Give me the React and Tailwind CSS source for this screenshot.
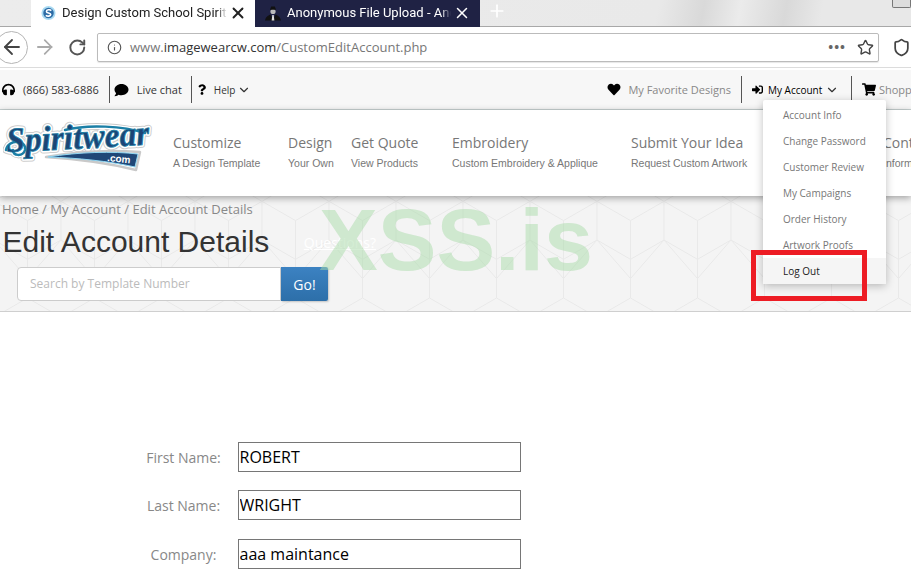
import { ArrowLeft, ArrowRight, ChevronDown, Info, Plus, RotateCw, Shield, Star, X } from "lucide-react";
import { FaComment, FaHeadphones, FaHeart, FaQuestion, FaShoppingCart, FaSignInAlt } from "react-icons/fa";

const navItems = [
  { title: "Customize", sub: "A Design Template", cls: "w-[90px] mr-[25px]" },
  { title: "Design", sub: "Your Own", cls: "w-[44px] mr-[19px]" },
  { title: "Get Quote", sub: "View Products", cls: "w-[67px] mr-[34px]" },
  { title: "Embroidery", sub: "Custom Embroidery & Applique", cls: "w-[148px] mr-[31px]" },
  { title: "Submit Your Idea", sub: "Request Custom Artwork", cls: "w-[113px] mr-[139px]" },
  { title: "Contact", sub: "Information", cls: "w-[100px] shrink-0" },
];

const accountLinks = ["Account Info", "Change Password", "Customer Review", "My Campaigns", "Order History", "Artwork Proofs"];

const fields = [
  { label: "First Name:", value: "ROBERT" },
  { label: "Last Name:", value: "WRIGHT" },
  { label: "Company:", value: "aaa maintance" },
];

const Divider = ({ className }) => <div className={`h-[27px] w-px shrink-0 bg-[#555] ${className}`} />;

const SchoolFavicon = () => (
  <svg width="15" height="16" viewBox="0 0 16 16" className="shrink-0">
    <circle cx="8" cy="8" r="7.500" fill="#a9daf2" />
    <circle cx="8" cy="8" r="5.600" fill="#2d6ca6" />
    <path d="M11 5.400C9.600 4 5.800 4.400 5.800 6.300c0 2.100 4.600 1.300 4.600 3.400 0 1.900-3.600 2.200-5.300.8" fill="none" stroke="#fff" strokeWidth="1.700" />
  </svg>
);

const SpyFavicon = () => (
  <svg width="16" height="16" viewBox="0 0 16 16" className="shrink-0">
    <path d="M0 15.500C1 11 3.500 10.500 5.500 9.500L8 15.500l2.500-6c2 1 4.500 1.500 5.500 6z" fill="#111" />
    <path d="M7.300 10h1.400l.7 5.500H6.600z" fill="#ddd" />
    <circle cx="8" cy="6.500" r="2.600" fill="#bbb" />
    <path d="M5 4.800h6L9.800 1.500H6.200z" fill="#111" />
  </svg>
);

const logoFont = {
  fontFamily: "'Liberation Serif', serif",
  fontWeight: 700,
  fontStyle: "italic",
  fontSize: 35,
};

const SpiritwearLogo = () => (
  <svg width="150" height="60" viewBox="0 0 150 60" className="shrink-0">
    <defs>
      <path id="logo-curve" d="M4 32C45 30 100 28 148 24" />
    </defs>
    {/* banner under the word */}
    <path d="M43 37C75 31 110 30 137 32L133 50C105 43 75 39 43 37Z" fill="#fff" stroke="#c9c9c9" strokeWidth="2.500" strokeLinejoin="round" />
    <path d="M45 37C75 32 110 31 135 34L132 47C105 41 75 38 45 37Z" fill="#1f4777" stroke="#8fd6f2" strokeWidth="1" />
    {/* halo */}
    <g fill="none" stroke="#c9c9c9" strokeWidth="7" strokeLinecap="round">
      <path d="M3 30C5 19 24 19 22 30C20 37 9 36 10 30" />
      <path d="M62 10C85 4 120 6 142 13" />
    </g>
    <text {...logoFont} stroke="#cccccc" strokeWidth="6" strokeLinejoin="round" fill="#fff">
      <textPath href="#logo-curve" textLength="143" lengthAdjust="spacingAndGlyphs">Spiritwear</textPath>
    </text>
    <g fill="none" stroke="#fff" strokeWidth="5" strokeLinecap="round">
      <path d="M3 30C5 19 24 19 22 30C20 37 9 36 10 30" />
      <path d="M62 10C85 4 120 6 142 13" />
    </g>
    <text {...logoFont} stroke="#fff" strokeWidth="4" strokeLinejoin="round" fill="#fff">
      <textPath href="#logo-curve" textLength="143" lengthAdjust="spacingAndGlyphs">Spiritwear</textPath>
    </text>
    {/* word and swashes */}
    <g fill="none" stroke="#1b7fa6" strokeWidth="2.500" strokeLinecap="round">
      <path d="M3 30C5 19 24 19 22 30C20 37 9 36 10 30" />
      <path d="M62 10C85 4 120 6 142 13" />
    </g>
    <text {...logoFont} stroke="#1b7fa6" strokeWidth="0.800" fill="#1d4474">
      <textPath href="#logo-curve" textLength="143" lengthAdjust="spacingAndGlyphs">Spiritwear</textPath>
    </text>
    <text x="104" y="41" fontFamily="'Liberation Sans', sans-serif" fontWeight="700" fontSize="10" fill="#fff" transform="rotate(6 104 41)">.com</text>
  </svg>
);

const HexPattern = () => (
  <svg className="absolute inset-0 h-full w-full" aria-hidden="true">
    <defs>
      <pattern id="hex" x="-6" y="-14" width="67" height="116" patternUnits="userSpaceOnUse">
        <path d="M0 19.300 33.500 0 67 19.300V58L33.500 77.300 0 58ZM33.500 77.300V116M33.500 38.600 0 19.300M33.500 38.600 67 19.300M33.500 38.600V77.300M0 58 33.500 96.600 67 58" fill="none" stroke="#e9e9e9" strokeWidth="1" />
      </pattern>
    </defs>
    <rect width="100%" height="100%" fill="url(#hex)" />
  </svg>
);

export default function App() {
  return (
    <div className="h-screen w-[911px] overflow-hidden bg-white font-['Open_Sans',sans-serif]">
      {/* browser tabs */}
      <div className="flex h-[27px] border-b border-[#a8a8a8] bg-[linear-gradient(100deg,#ececec_0%,#e9e9e9_72%,#d9d9d9_77%,#ebebeb_81%,#d9d9d9_86%,#e8e8e8_90%)]">
        <div className="ml-[31px] flex h-[27px] w-[224px] shrink-0 items-center bg-white pb-[2px] pl-[10px]">
          <SchoolFavicon />
          <span className="ml-[6px] w-[165px] overflow-hidden whitespace-nowrap font-['Roboto',sans-serif] text-[13px] text-[#222] [mask-image:linear-gradient(90deg,#000_94%,transparent)]">Design Custom School Spiritwear</span>
          <X className="ml-[2px] h-[18px] w-[18px] shrink-0 text-[#222]" strokeWidth={2.500} />
        </div>
        <div className="flex h-[27px] w-[225px] shrink-0 items-center bg-[#1f2244] pb-[2px] pl-[10px]">
          <SpyFavicon />
          <span className="ml-[6px] w-[164px] overflow-hidden whitespace-nowrap font-['Roboto',sans-serif] text-[13px] text-white [mask-image:linear-gradient(90deg,#000_94%,transparent)]">Anonymous File Upload - Anonymous</span>
          <X className="ml-[2px] h-[18px] w-[18px] shrink-0 text-white" strokeWidth={2} />
        </div>
        <Plus className="ml-[7px] mt-[1px] h-[20px] w-[20px] text-white" strokeWidth={2} />
        <div className="ml-auto h-[8px] w-[19px] rounded-b-[2px] border border-t-0 border-[#777] bg-[#ddd]" />
      </div>

      {/* browser toolbar */}
      <div className="flex h-[41px] items-center border-b border-[#dcdcdc] bg-white">
        <div className="-ml-[5px] flex h-[33px] w-[33px] shrink-0 items-center justify-center rounded-full border border-[#b5b5b5]">
          <ArrowLeft className="h-[24px] w-[24px] text-[#444]" strokeWidth={1.800} />
        </div>
        <ArrowRight className="ml-[5px] h-[24px] w-[24px] text-[#aaa]" strokeWidth={1.800} />
        <RotateCw className="ml-[12px] h-[19px] w-[19px] text-[#555]" strokeWidth={2.500} />
        <div className="ml-[10px] flex h-[29px] w-[782px] shrink-0 items-center rounded-[2px] border border-[#bbb] pl-[9px] pr-[4px] shadow-[0_1px_1px_rgba(0,0,0,0.1)]">
          <Info className="h-[15px] w-[15px] text-[#555]" strokeWidth={1.800} />
          <span className="ml-[8px] whitespace-nowrap pt-[2px] text-[13px] text-[#777]">
            www.<span className="text-[#333]">imagewearcw.com</span>/CustomEditAccount.php
          </span>
          <span className="ml-auto text-[13px] font-bold leading-none tracking-[1px] text-[#666]">•••</span>
          <Star className="ml-[11px] h-[17px] w-[17px] text-[#444]" strokeWidth={2} />
        </div>
        <Shield className="ml-[13px] h-[19px] w-[19px] shrink-0 text-[#444]" strokeWidth={2.200} />
      </div>

      {/* utility bar */}
      <div className="mt-[2px] flex h-[40px] items-center border-b border-[#c8d2d2] bg-[#f7f7f7] text-[11px] text-[#333]">
        <FaHeadphones className="ml-[2px] h-[13px] w-[13px] shrink-0 text-black" />
        <span className="ml-[8px] w-[76px] whitespace-nowrap pt-[2px]">(866) 583-6886</span>
        <Divider className="ml-[10px]" />
        <FaComment className="ml-[4px] h-[14px] w-[15px] shrink-0 text-black" />
        <span className="ml-[8px] w-[45px] whitespace-nowrap pt-[2px]">Live chat</span>
        <Divider className="ml-[9px]" />
        <FaQuestion className="ml-[6px] h-[11px] w-[8px] shrink-0 text-black" />
        <span className="ml-[8px] w-[22px] whitespace-nowrap pt-[2px] text-[10px]">Help</span>
        <ChevronDown className="ml-[2px] h-[14px] w-[14px] shrink-0" strokeWidth={2} />

        <FaHeart className="ml-[356px] h-[13px] w-[14px] shrink-0 text-black" />
        <span className="ml-[7px] w-[103px] whitespace-nowrap pt-[2px] text-[#888]">My Favorite Designs</span>
        <Divider className="ml-[10px]" />
        <div className="relative ml-[10px] flex h-full w-[99px] shrink-0 items-center">
          <FaSignInAlt className="h-[11px] w-[11px] shrink-0 text-black" />
          <span className="ml-[5px] w-[55px] whitespace-nowrap pt-[2px] text-[10px] text-black">My Account</span>
          <ChevronDown className="ml-[2px] h-[14px] w-[14px] shrink-0" strokeWidth={2} />

          <div className="absolute left-[11px] top-[30px] z-20 w-[123px] rounded-[2px] bg-white pt-[2px] shadow-[0_2px_8px_rgba(0,0,0,0.25)]">
            {accountLinks.map((link) => (
              <div key={link} className="flex h-[26px] items-center whitespace-nowrap pl-[20px] text-[10px] text-[#777]">{link}</div>
            ))}
            <div className="flex h-[26px] items-center bg-[#f5f5f5] pl-[20px] text-[10px] font-medium text-[#222]">Log Out</div>
            <div className="absolute left-[-12px] top-[150px] h-[51px] w-[116px] border-[5px] border-[#ed1c24]" />
          </div>
        </div>
        <Divider />
        <FaShoppingCart className="ml-[10px] h-[13px] w-[14px] shrink-0 text-black" />
        <span className="ml-[3px] whitespace-nowrap pt-[2px] text-[#888]">Shopping Cart</span>
      </div>

      {/* site header */}
      <div className="relative z-10 flex h-[86px] items-start bg-white shadow-[0_2px_7px_rgba(0,0,0,0.35)]">
        <div className="ml-[3px] mt-[10px] w-[150px] shrink-0">
          <SpiritwearLogo />
        </div>
        <div className="ml-[20px] mt-[23px] flex">
          {navItems.map((item) => (
            <div key={item.title} className={`shrink-0 whitespace-nowrap ${item.cls}`}>
              <div className="text-[14px] leading-[20px] text-[#777]">{item.title}</div>
              <div className="mt-[2px] font-['Liberation_Sans',sans-serif] text-[10.500px] leading-[16px] text-[#777]">{item.sub}</div>
            </div>
          ))}
        </div>
      </div>

      {/* hero */}
      <div className="relative h-[116px] border-b border-[#cfcfcf] bg-[#f4f4f4]">
        <HexPattern />
        <div className="relative pl-[2px] pt-[4px]">
          <div className="text-[13px] leading-[18px] text-[#888]">Home / My Account / Edit Account Details</div>
          <div className="mt-[7px] flex items-center">
            <h1 className="ml-[0.500px] font-['Liberation_Sans',sans-serif] text-[30px] leading-[34px] text-[#333]">Edit Account Details</h1>
            <a className="ml-[34.500px] text-[14px] text-white underline">Questions?</a>
          </div>
          <div className="ml-[15px] mt-[8px] flex h-[34px] w-[311px]">
            <div className="flex flex-1 items-center rounded-l-[4px] border border-[#ccc] bg-white pl-[12px] text-[12px] text-[#bbb]">Search by Template Number</div>
            <div className="flex w-[47px] items-center justify-center rounded-r-[2px] bg-[linear-gradient(#3c82c2,#2d6fa9)] text-[14px] text-white shadow-[1px_1px_2px_rgba(0,0,0,0.2)]">Go!</div>
          </div>
        </div>
        {/* watermark over the hero */}
        <div className="absolute left-[319px] top-[-6px] font-['Liberation_Sans',sans-serif] text-[88px] font-bold leading-[100px] text-[rgba(170,220,170,0.5)]">XSS.is</div>
      </div>

      {/* account form */}
      <div className="flex flex-col gap-[18px] pt-[130px]">
        {fields.map((field) => (
          <div key={field.label} className="flex items-center last:mt-[1px]">
            <label className="ml-[120px] w-[127px] text-center text-[14px] text-[#888]">{field.label}</label>
            <input
              readOnly
              value={field.value}
              className="-ml-[9px] h-[30px] w-[283px] border border-[#767676] pl-[0.500px] text-[16px] text-black outline-none"
            />
          </div>
        ))}
      </div>
    </div>
  );
}
